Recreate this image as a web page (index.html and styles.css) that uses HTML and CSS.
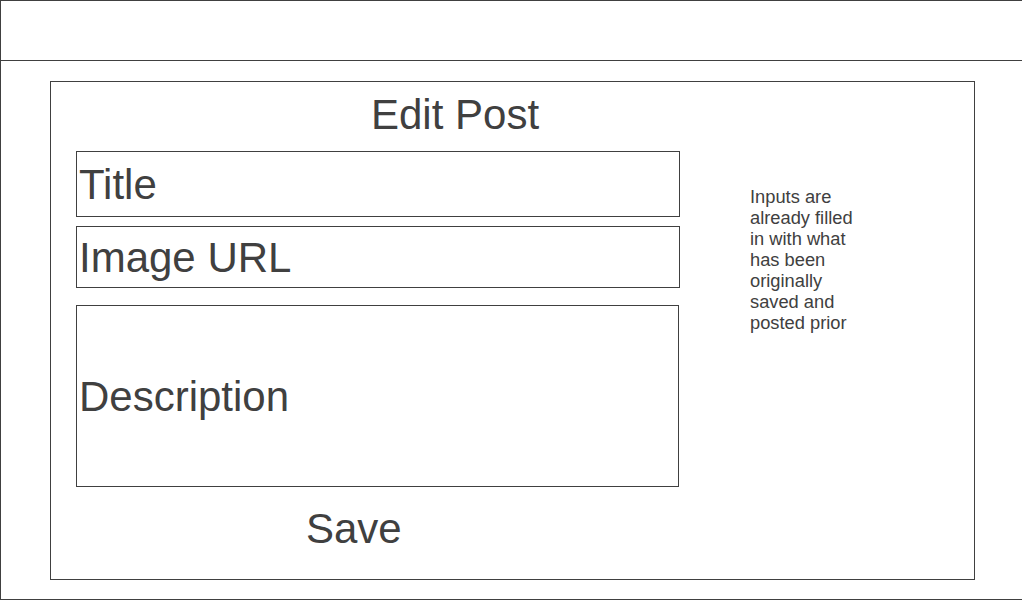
FILE: index.html
```html
<!DOCTYPE html>
<html lang="en">
<head>
<meta charset="utf-8">
<title>Edit Post</title>
<link rel="stylesheet" href="styles.css">
</head>
<body>
<div class="frame">
  <header class="topbar"></header>
  <main class="card">
    <section class="form">
      <h1 class="heading">Edit Post</h1>
      <div class="field field-title">Title</div>
      <div class="field field-url">Image URL</div>
      <div class="field field-desc">Description</div>
      <div class="save">Save</div>
    </section>
    <aside class="note">Inputs are already filled in with what has been originally saved and posted prior</aside>
  </main>
</div>
</body>
</html>
```
FILE: styles.css
```css
html, body {
  margin: 0;
  padding: 0;
  background: #ffffff;
  overflow: hidden;
}
body {
  font-family: "Liberation Sans", Arial, sans-serif;
  color: #404040;
}
.frame {
  box-sizing: border-box;
  width: 1022px;
  height: 600px;
  border: 1px solid #404040;
  border-right: none;
}
.topbar {
  height: 59px;
  border-bottom: 1px solid #404040;
}
.card {
  box-sizing: border-box;
  margin: 20px 0 0 49px;
  width: 925px;
  height: 499px;
  border: 1px solid #404040;
  display: flex;
  flex-direction: row;
  align-items: flex-start;
}
.form {
  width: 604px;
  padding-left: 25px;
  display: flex;
  flex-direction: column;
}
.heading {
  margin: 10px 0 0 295px;
  font-size: 42px;
  font-weight: normal;
  line-height: 46px;
}
.field {
  box-sizing: border-box;
  border: 1px solid #404040;
  display: flex;
  align-items: center;
  padding: 2px 0 0 2px;
  font-size: 42px;
  line-height: 46px;
}
.field-title {
  margin-top: 13px;
  height: 66px;
}
.field-url {
  margin-top: 9px;
  height: 62px;
}
.field-desc {
  margin-top: 17px;
  height: 182px;
  width: 603px;
}
.save {
  margin: 19px 0 0 230px;
  font-size: 42px;
  line-height: 46px;
}
.note {
  margin: 104px 0 0 70px;
  width: 112px;
  font-size: 18.3px;
  line-height: 21px;
}
```
